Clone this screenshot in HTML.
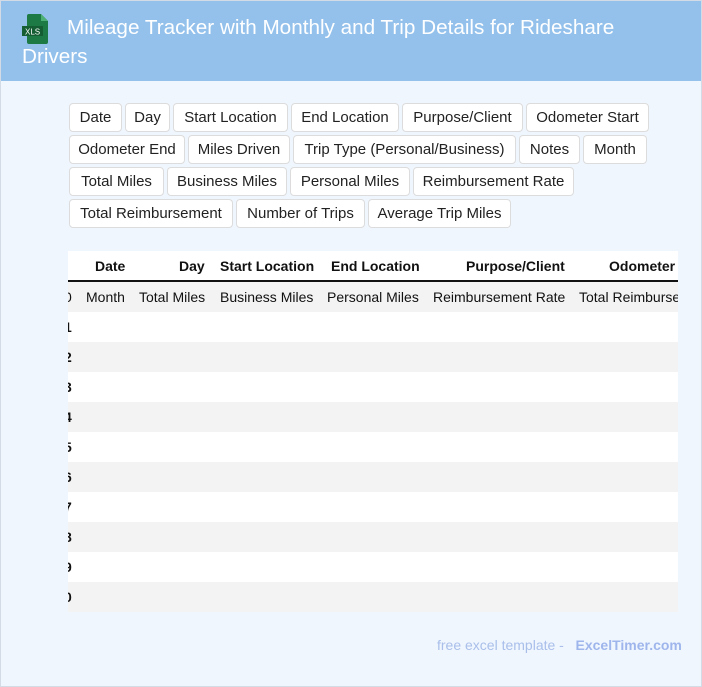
<!DOCTYPE html>
<html><head><meta charset="utf-8"><style>
*{margin:0;padding:0;box-sizing:border-box}
body{width:702px;height:687px;background:#f0f6fe;font-family:"Liberation Sans",Arial,sans-serif;position:relative;overflow:hidden}
.frame{position:absolute;left:0;top:0;width:702px;height:687px;border:1px solid #d3dce6;}
.hdr{position:absolute;left:1px;top:1px;width:700px;height:80px;background:#93c1ec}
.title{position:absolute;left:22px;top:13px;width:660px;color:#fff;font-size:20.7px;line-height:29px;text-indent:45px}
.b{position:absolute;height:29px;background:#fff;border:1px solid #dcdcdc;border-radius:4px;font-size:15px;line-height:27px;text-align:center;color:#222;white-space:nowrap}
.tbl{position:absolute;left:68px;top:251px;width:610px;height:361px;background:#fff;overflow:hidden}
.row{position:absolute;left:0;width:610px;height:30px}
.g{background:#f3f3f3}
.t{position:absolute;font-size:14px;white-space:nowrap;color:#111;top:7px}
.h{font-weight:bold;top:7px}
</style></head><body>
<div class="frame"></div>
<div class="hdr"></div>
<svg style="position:absolute;left:21px;top:13px" width="30" height="32" viewBox="0 0 30 32"><path d="M8 1h12l7 7v21a2 2 0 0 1-2 2H8a2 2 0 0 1-2-2V3a2 2 0 0 1 2-2z" fill="#1e7a45"/><path d="M20 1v7h7z" fill="#4caf74"/><rect x="1" y="13" width="21" height="10" fill="#155d33"/><text x="4" y="21.5" font-size="8" fill="#fff" font-family="Liberation Sans">XLS</text></svg>
<div class="title">Mileage Tracker with Monthly and Trip Details for Rideshare Drivers</div>

<div class="b" style="left:69px;top:103px;width:53px">Date</div>
<div class="b" style="left:125px;top:103px;width:45px">Day</div>
<div class="b" style="left:173px;top:103px;width:115px">Start Location</div>
<div class="b" style="left:291px;top:103px;width:108px">End Location</div>
<div class="b" style="left:402px;top:103px;width:121px">Purpose/Client</div>
<div class="b" style="left:526px;top:103px;width:123px">Odometer Start</div>
<div class="b" style="left:69px;top:135px;width:116px">Odometer End</div>
<div class="b" style="left:188px;top:135px;width:102px">Miles Driven</div>
<div class="b" style="left:293px;top:135px;width:223px">Trip Type (Personal/Business)</div>
<div class="b" style="left:519px;top:135px;width:61px">Notes</div>
<div class="b" style="left:583px;top:135px;width:64px">Month</div>
<div class="b" style="left:69px;top:167px;width:95px">Total Miles</div>
<div class="b" style="left:167px;top:167px;width:120px">Business Miles</div>
<div class="b" style="left:290px;top:167px;width:120px">Personal Miles</div>
<div class="b" style="left:413px;top:167px;width:161px">Reimbursement Rate</div>
<div class="b" style="left:69px;top:199px;width:164px">Total Reimbursement</div>
<div class="b" style="left:236px;top:199px;width:129px">Number of Trips</div>
<div class="b" style="left:368px;top:199px;width:143px">Average Trip Miles</div>

<div class="tbl">
<div class="row" style="top:0;border-bottom:2px solid #111;height:31px">
<span class="t h" style="left:27px">Date</span>
<span class="t h" style="left:111px">Day</span>
<span class="t h" style="left:152px">Start Location</span>
<span class="t h" style="left:263px">End Location</span>
<span class="t h" style="left:398px">Purpose/Client</span>
<span class="t h" style="left:541px">Odometer</span>
</div>
<div class="row g" style="top:31px">
<span class="t" style="left:-4px">0</span>
<span class="t" style="left:18px">Month</span>
<span class="t" style="left:71px">Total Miles</span>
<span class="t" style="left:152px">Business Miles</span>
<span class="t" style="left:259px">Personal Miles</span>
<span class="t" style="left:365px">Reimbursement Rate</span>
<span class="t" style="left:511px">Total Reimbursement</span>
</div>
<div class="row" style="top:61px"><span class="t h" style="left:-4px">1</span></div>
<div class="row g" style="top:91px"><span class="t h" style="left:-4px">2</span></div>
<div class="row" style="top:121px"><span class="t h" style="left:-4px">3</span></div>
<div class="row g" style="top:151px"><span class="t h" style="left:-4px">4</span></div>
<div class="row" style="top:181px"><span class="t h" style="left:-4px">5</span></div>
<div class="row g" style="top:211px"><span class="t h" style="left:-4px">6</span></div>
<div class="row" style="top:241px"><span class="t h" style="left:-4px">7</span></div>
<div class="row g" style="top:271px"><span class="t h" style="left:-4px">8</span></div>
<div class="row" style="top:301px"><span class="t h" style="left:-4px">9</span></div>
<div class="row g" style="top:331px"><span class="t h" style="left:-4px">0</span></div>
</div>

<div style="position:absolute;left:437px;top:637px;font-size:14px;color:#a9bfea;white-space:nowrap">free excel template - &nbsp;&nbsp;<b style="color:#9fb6ec">ExcelTimer.com</b></div>
</body></html>
